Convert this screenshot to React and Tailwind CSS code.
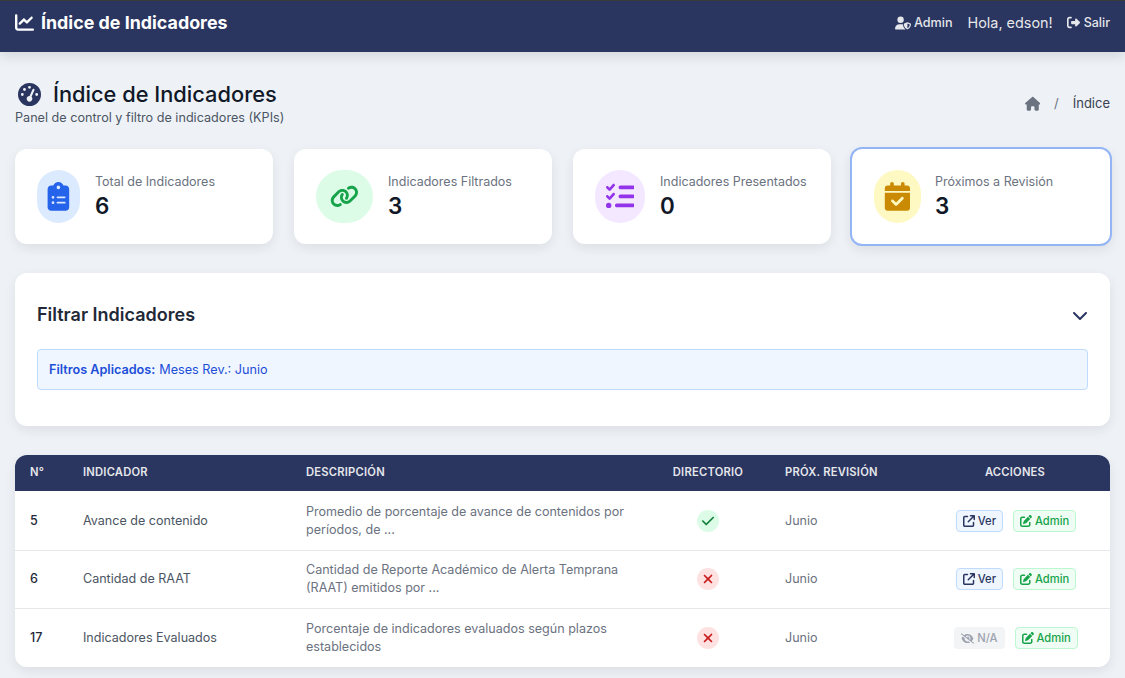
import React from "react";
import {
  FaChartLine, FaUserShield, FaRightFromBracket, FaHouse, FaClipboardList, FaLink, FaListCheck,
  FaCalendarCheck, FaChevronDown, FaCheck, FaXmark, FaArrowUpRightFromSquare, FaPenToSquare, FaEyeSlash,
  FaGaugeHigh,
} from "react-icons/fa6";

const cards = [
  { label: "Total de Indicadores", value: "6", Icon: FaClipboardList, w: "w-[43px]", bg: "bg-[#dbeafe]", color: "text-[#2563eb]" },
  { label: "Indicadores Filtrados", value: "3", Icon: FaLink, w: "w-[57px]", bg: "bg-[#dcfce7]", color: "text-[#16a34a]" },
  { label: "Indicadores Presentados", value: "0", Icon: FaListCheck, w: "w-[50px]", bg: "bg-[#f3e8ff]", color: "text-[#9333ea]" },
  { label: "Próximos a Revisión", value: "3", Icon: FaCalendarCheck, w: "w-[47px]", bg: "bg-[#fef9c3]", color: "text-[#ca8a04]", active: true },
];

const rows = [
  { n: "5", name: "Avance de contenido", desc: "Promedio de porcentaje de avance de contenidos por períodos, de ...", ok: true, ver: true, h: "h-[59px]", pt: "pt-[2px]" },
  { n: "6", name: "Cantidad de RAAT", desc: "Cantidad de Reporte Académico de Alerta Temprana (RAAT) emitidos por ...", ok: false, ver: true, h: "h-[58px]", pt: "pt-0" },
  { n: "17", name: "Indicadores Evaluados", desc: "Porcentaje de indicadores evaluados según plazos establecidos", ok: false, ver: false, h: "h-[59px]", pt: "pt-[1px]" },
];

function AdminButton() {
  return (
    <span className="inline-flex items-center gap-[3px] h-[22px] px-[6px] rounded-[4px] border border-[#bbf7d0] bg-[#f0fdf4] text-[#16a34a] text-[11.2px] font-medium">
      <FaPenToSquare className="text-[12px]" /> Admin
    </span>
  );
}

export default function App() {
  return (
    <div className="min-h-[678px] bg-[#eef2f7] font-['Inter','Noto_Sans',sans-serif] text-[#111827]">
      <header className="h-[52px] bg-[#2a3560] border-t border-[#3a3a3a] shadow-[0_4px_12px_rgba(0,0,0,0.12)] flex items-center justify-between px-[15px] pb-[7px] text-white">
        <div className="flex items-center gap-[7px] text-[17.85px] font-bold">
          <FaChartLine className="text-[19px]" />
          <span>Índice de Indicadores</span>
        </div>
        <div className="flex items-center text-[#e5e7eb]">
          <span className="flex items-center gap-[3px] text-[12.6px] font-medium">
            <FaUserShield className="text-[16px]" /> Admin
          </span>
          <span className="ml-[15px] text-[14.4px]">Hola, edson!</span>
          <span className="ml-[14px] flex items-center gap-[4px] text-[12.5px] font-medium">
            <FaRightFromBracket className="text-[13px]" /> Salir
          </span>
        </div>
      </header>

      <main className="px-[15px]">
        <div className="flex items-start justify-between pt-[28px] h-[97px]">
          <div>
            <div className="flex items-center gap-[12px] pl-[3px] h-[28px]">
              <FaGaugeHigh className="text-[23px] text-[#2a3560]" />
              <h1 className="text-[21.8px] font-medium leading-[28px]">Índice de Indicadores</h1>
            </div>
            <p className="mt-[1px] text-[12.63px] leading-[17px] text-[#4b5563]">Panel de control y filtro de indicadores (KPIs)</p>
          </div>
          <div className="flex items-center h-[48px] text-[13px] text-[#374151]">
            <FaHouse className="text-[15.5px] text-[#6b7280]" />
            <span className="mx-[14px] text-[#6b7280]">/</span>
            <span>Índice</span>
          </div>
        </div>

        <div className="grid grid-cols-4 gap-[21px]">
          {cards.map(({ label, value, Icon, w, bg, color, active }) => (
            <div
              key={label}
              className={`bg-white rounded-xl flex items-center shadow-[0_4px_12px_rgba(0,0,0,0.08)] ${
                active ? "-m-[2px] h-[99px] border-2 border-[#93b4f5] pl-[22px]" : "h-[95px] pl-[22px]"
              }`}
            >
              <div className={`${w} h-[53px] shrink-0 rounded-full flex items-center justify-center text-[28.8px] ${bg} ${color}`}>
                <Icon />
              </div>
              <div className={`pt-[2px] ${active ? "ml-[14px]" : "ml-[15px]"}`}>
                <div className="text-[12.5px] leading-[16px] text-[#6b7280]">{label}</div>
                <div className="text-[22.4px] leading-[32px] font-semibold">{value}</div>
              </div>
            </div>
          ))}
        </div>

        <section className="mt-[29px] h-[153px] bg-white rounded-xl shadow-[0_4px_12px_rgba(0,0,0,0.08)] px-[22px] pt-[29px]">
          <div className="flex items-center justify-between h-[25px]">
            <h2 className="text-[18px] font-semibold text-[#1f2937]">Filtrar Indicadores</h2>
            <FaChevronDown className="text-[16px] text-[#2a3560]" />
          </div>
          <div className="mt-[22px] h-[41px] flex items-center px-[11px] pt-[1px] rounded-[4px] border border-[#bfdbfe] bg-[#eff6ff] text-[12.65px] text-[#1d4ed8]">
            <strong className="font-semibold mr-1">Filtros Aplicados:</strong> Meses Rev.: Junio
          </div>
        </section>

        <section className="mt-[29px] bg-white rounded-xl overflow-hidden shadow-[0_4px_12px_rgba(0,0,0,0.08)]">
          <table className="w-full table-fixed border-collapse">
            <colgroup>
              <col className="w-[53px]" />
              <col className="w-[223px]" />
              <col className="w-[355px]" />
              <col className="w-[124px]" />
              <col className="w-[150px]" />
              <col />
            </colgroup>
            <thead>
              <tr className="h-[36px] bg-[#2a3560] text-[#e5e7eb] text-[11.2px] tracking-[0.02em]">
                <th className="px-[15px] pb-[1px] text-left font-semibold">N°</th>
                <th className="px-[15px] pb-[1px] text-left font-semibold">INDICADOR</th>
                <th className="px-[15px] pb-[1px] text-left font-semibold">DESCRIPCIÓN</th>
                <th className="px-[15px] pb-[1px] text-center font-semibold">DIRECTORIO</th>
                <th className="px-[15px] pb-[1px] text-left font-semibold">PRÓX. REVISIÓN</th>
                <th className="px-[15px] pb-[1px] text-center font-semibold">ACCIONES</th>
              </tr>
            </thead>
            <tbody>
              {rows.map((r, i) => (
                <tr key={r.n} className={`${r.h} text-[12.55px] ${i < 2 ? "border-b border-[#e5e7eb]" : ""}`}>
                  <td className={`px-[15px] text-[#1f2937] font-medium ${r.pt}`}>{r.n}</td>
                  <td className={`px-[15px] text-[#4b5563] ${r.pt}`}>{r.name}</td>
                  <td className={`px-[15px] text-[#6b7280] leading-[18.5px] ${r.pt}`}>{r.desc}</td>
                  <td className={`px-[15px] ${r.pt}`}>
                    <span className={`mx-auto flex h-[22px] w-[22px] items-center justify-center rounded-full text-[14px] ${r.ok ? "bg-[#dcfce7] text-[#15803d]" : "bg-[#fee2e2] text-[#c81e1e]"}`}>
                      {r.ok ? <FaCheck /> : <FaXmark />}
                    </span>
                  </td>
                  <td className={`px-[15px] text-[#6b7280] ${r.pt}`}>Junio</td>
                  <td className={`px-[15px] ${r.pt}`}>
                    <div className="flex items-center justify-center gap-[10px] pl-[2px]">
                      {r.ver ? (
                        <span className="inline-flex items-center gap-[3px] h-[22px] px-[6px] rounded-[4px] border border-[#bfdbfe] bg-[#eff6ff] text-[#2a3560] text-[11.2px] font-medium">
                          <FaArrowUpRightFromSquare className="text-[12px]" /> Ver
                        </span>
                      ) : (
                        <span className="inline-flex items-center gap-[3px] h-[22px] px-[7px] rounded-[4px] bg-[#f3f4f6] text-[#9ca3af] text-[11.2px] font-medium">
                          <FaEyeSlash className="text-[13px]" /> N/A
                        </span>
                      )}
                      <AdminButton />
                    </div>
                  </td>
                </tr>
              ))}
            </tbody>
          </table>
        </section>
      </main>
    </div>
  );
}
